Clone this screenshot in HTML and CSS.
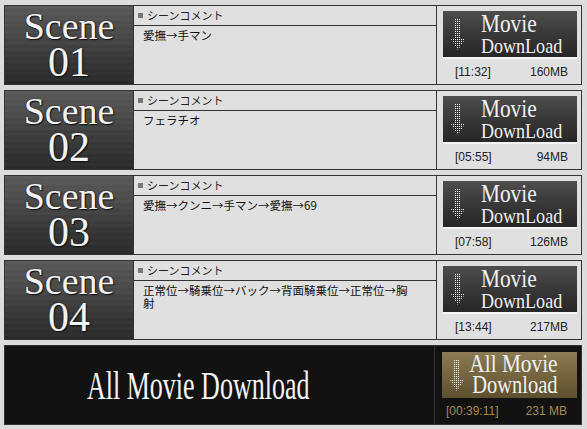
FILE: index.html
```html
<!DOCTYPE html>
<html lang="ja">
<head>
<meta charset="utf-8">
<title>Scenes</title>
<link rel="stylesheet" href="styles.css">
</head>
<body>
<div class="list">
  <div class="row">
    <div class="scene"><span class="scene-word">Scene</span><span class="scene-num">01</span></div>
    <div class="comment">
      <div class="comment-head"><span class="sq"></span>シーンコメント</div>
      <div class="comment-body">愛撫→手マン</div>
    </div>
    <div class="dl">
      <a class="btn" href="#">
        <svg class="arrow" width="14" height="32" viewBox="0 0 14 32"><use href="#arr"/></svg>
        <span class="btn-text"><span class="l1">Movie</span><span class="l2">DownLoad</span></span>
      </a>
      <div class="meta"><span>[11:32]</span><span>160MB</span></div>
    </div>
  </div>
  <div class="row">
    <div class="scene"><span class="scene-word">Scene</span><span class="scene-num">02</span></div>
    <div class="comment">
      <div class="comment-head"><span class="sq"></span>シーンコメント</div>
      <div class="comment-body">フェラチオ</div>
    </div>
    <div class="dl">
      <a class="btn" href="#">
        <svg class="arrow" width="14" height="32" viewBox="0 0 14 32"><use href="#arr"/></svg>
        <span class="btn-text"><span class="l1">Movie</span><span class="l2">DownLoad</span></span>
      </a>
      <div class="meta"><span>[05:55]</span><span>94MB</span></div>
    </div>
  </div>
  <div class="row">
    <div class="scene"><span class="scene-word">Scene</span><span class="scene-num">03</span></div>
    <div class="comment">
      <div class="comment-head"><span class="sq"></span>シーンコメント</div>
      <div class="comment-body">愛撫→クンニ→手マン→愛撫→69</div>
    </div>
    <div class="dl">
      <a class="btn" href="#">
        <svg class="arrow" width="14" height="32" viewBox="0 0 14 32"><use href="#arr"/></svg>
        <span class="btn-text"><span class="l1">Movie</span><span class="l2">DownLoad</span></span>
      </a>
      <div class="meta"><span>[07:58]</span><span>126MB</span></div>
    </div>
  </div>
  <div class="row">
    <div class="scene"><span class="scene-word">Scene</span><span class="scene-num">04</span></div>
    <div class="comment">
      <div class="comment-head"><span class="sq"></span>シーンコメント</div>
      <div class="comment-body">正常位→騎乗位→バック→背面騎乗位→正常位→胸射</div>
    </div>
    <div class="dl">
      <a class="btn" href="#">
        <svg class="arrow" width="14" height="32" viewBox="0 0 14 32"><use href="#arr"/></svg>
        <span class="btn-text"><span class="l1">Movie</span><span class="l2">DownLoad</span></span>
      </a>
      <div class="meta"><span>[13:44]</span><span>217MB</span></div>
    </div>
  </div>
  <div class="row all">
    <div class="all-title"><span>All Movie Download</span></div>
    <div class="dl dl-all">
      <a class="btn btn-gold" href="#">
        <svg class="arrow" width="14" height="32" viewBox="0 0 14 32"><use href="#arr"/></svg>
        <span class="btn-text"><span class="l1">All Movie</span><span class="l2">Download</span></span>
      </a>
      <div class="meta meta-gold"><span>[00:39:11]</span><span>231 MB</span></div>
    </div>
  </div>
</div>
<svg width="0" height="0" class="defs">
  <defs>
    <pattern id="dots" width="2" height="2" patternUnits="userSpaceOnUse">
      <rect x="0" y="0" width="1" height="1" fill="#fff"/>
    </pattern>
    <symbol id="arr" viewBox="0 0 14 32">
      <path d="M4 0 H10 V20 H14 L7 31 L0 20 H4 Z" fill="url(#dots)"/>
    </symbol>
  </defs>
</svg>
</body>
</html>
```
FILE: styles.css
```css
html, body {
  margin: 0;
  padding: 0;
  background: #dcdcdc;
}
body {
  font-family: "Liberation Sans", "Noto Sans CJK JP", sans-serif;
}
.defs {
  position: absolute;
  width: 0;
  height: 0;
}
.list {
  padding: 5px 0 0 4px;
  display: flex;
  flex-direction: column;
  gap: 5px;
}
.row {
  width: 576px;
  height: 78px;
  border: 1px solid #333;
  display: flex;
  background: #e0e0e0;
}
.scene {
  width: 128px;
  display: flex;
  flex-direction: column;
  align-items: center;
  font-family: "Liberation Serif", serif;
  color: #f2f2f2;
  text-shadow: 1px 1px 1px #111, 0 0 2px #222;
  background:
    repeating-linear-gradient(180deg, rgba(255,255,255,0.015) 0 3px, rgba(0,0,0,0.015) 3px 6px),
    linear-gradient(180deg, #595959 0%, #4a4a4a 35%, #363636 70%, #2a2a2a 100%);
}
.scene-word {
  font-size: 38px;
  line-height: 40px;
}
.scene-num {
  font-size: 42px;
  line-height: 32px;
}
.comment {
  width: 302px;
  border-left: 1px solid #333;
  border-right: 1px solid #333;
  display: flex;
  flex-direction: column;
}
.comment-head {
  height: 19px;
  border-bottom: 1px solid #333;
  font-size: 11px;
  line-height: 19px;
  color: #222;
  padding-left: 4px;
  display: flex;
  align-items: center;
  gap: 4px;
  font-family: "Noto Sans CJK JP", sans-serif;
}
.sq {
  width: 5px;
  height: 5px;
  background: #777;
}
.comment-body {
  padding: 3px 23px 0 9px;
  font-size: 11.5px;
  line-height: 13px;
  color: #111;
  font-family: "Noto Sans CJK JP", sans-serif;
}
.dl {
  width: 144px;
  display: flex;
  flex-direction: column;
  padding: 5px 4px 0 6px;
  box-sizing: border-box;
}
.btn {
  height: 46px;
  border-bottom: 2px solid #f4f4f4;
  display: flex;
  text-decoration: none;
  background: linear-gradient(180deg, #4e4e4e 0%, #3a3a3a 45%, #262626 100%);
}
.arrow {
  width: 14px;
  height: 32px;
  margin: 8px 0 0 8px;
  flex: none;
}
.btn-text {
  display: flex;
  flex-direction: column;
  margin-left: 16px;
  transform: scaleX(0.82);
  transform-origin: left top;
  font-family: "Liberation Serif", serif;
  color: #f0f0f0;
  white-space: nowrap;
}
.l1 {
  font-size: 26px;
  line-height: 22px;
  padding-top: 2px;
}
.l2 {
  font-size: 22px;
  line-height: 22px;
}
.meta {
  display: flex;
  justify-content: space-between;
  padding: 6px 9px 0 12px;
  font-size: 12px;
  line-height: 14px;
  color: #222;
}
.row.all {
  background: #121212;
}
.all-title {
  width: 430px;
  border-right: 1px solid #333;
  display: flex;
  align-items: center;
  padding-left: 82px;
  box-sizing: border-box;
}
.all-title span {
  display: inline-block;
  font-family: "Liberation Serif", serif;
  font-size: 40px;
  color: #f4f4f4;
  white-space: nowrap;
  transform: scaleX(0.65);
  transform-origin: left center;
}
.dl-all {
  width: 146px;
  padding-left: 7px;
  padding-top: 6px;
}
.btn-gold {
  border-bottom: none;
  height: 46px;
  background: linear-gradient(180deg, #8c7c55 0%, #75653f 50%, #5e4f2e 100%);
}
.btn-gold .btn-text {
  margin-left: 5px;
  width: 110px;
  align-items: flex-end;
}
.btn-gold .l1 {
  font-size: 26px;
  line-height: 20px;
  padding-top: 2px;
}
.btn-gold .l2 {
  font-size: 25px;
  line-height: 21px;
}
.meta-gold {
  color: #a28b55;
  padding: 6px 10px 0 4px;
}
```
